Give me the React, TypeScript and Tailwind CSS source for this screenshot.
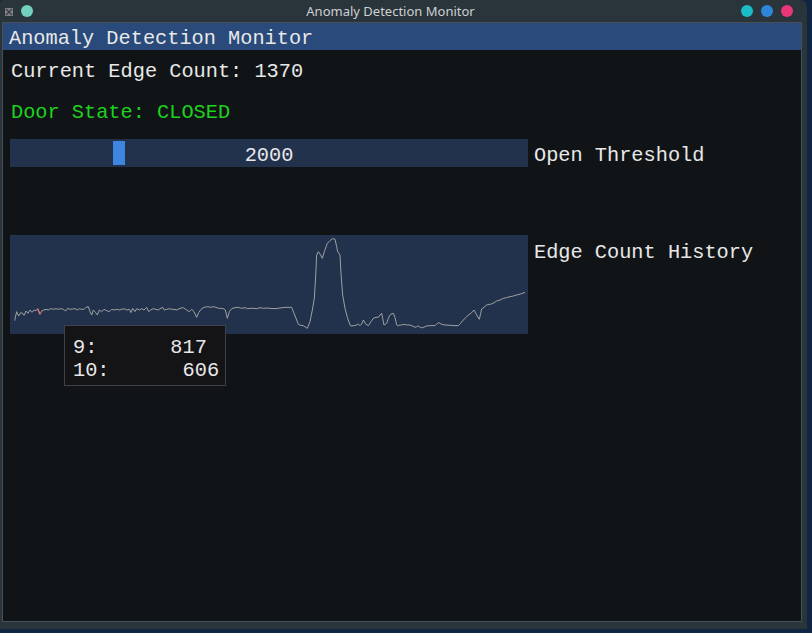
import React from "react";

const L: [number, number][] = [
  [44, 272], [50, 245], [56, 258], [62, 248], [68, 250], [72, 256], [78, 243], [84, 250], [90, 240], [96, 247],
  [102, 240], [108, 242], [113, 236], [120, 253], [126, 242], [132, 240], [138, 238], [145, 240], [152, 236],
  [160, 238], [168, 236], [175, 238], [182, 236], [190, 238], [197, 243], [203, 235], [210, 238], [218, 237],
  [225, 236], [232, 240], [238, 236], [245, 238], [252, 238], [258, 232], [265, 230], [270, 245], [275, 255],
  [280, 240], [287, 248], [292, 255], [298, 240], [305, 245], [312, 238], [320, 242], [328, 245], [335, 238],
  [342, 240], [350, 238], [358, 240], [365, 238], [372, 236], [380, 240], [388, 238], [393, 248], [398, 235],
  [405, 245], [410, 236], [418, 240], [425, 236], [432, 240], [440, 232], [446, 245], [452, 240], [460, 236],
  [468, 238], [475, 240], [480, 236], [488, 232], [493, 240], [500, 238], [508, 236], [515, 238], [522, 238],
  [530, 240], [540, 235], [550, 233], [560, 240], [568, 245], [575, 238], [582, 245], [590, 262], [596, 248],
  [603, 238], [612, 232], [622, 230], [632, 232], [640, 230], [648, 232], [655, 235], [662, 235], [670, 236],
  [676, 240], [682, 265], [688, 245], [695, 236], [705, 233], [715, 232], [725, 235], [735, 233], [742, 236],
  [750, 235], [760, 235], [770, 236], [780, 233], [790, 235], [800, 234],
];

const R: [number, number][] = [
  [0, 235], [15, 236], [30, 234], [45, 232], [65, 232], [72, 250], [80, 270], [85, 283], [92, 286], [100, 287],
  [107, 292], [112, 295], [120, 275], [127, 240], [133, 205], [137, 140], [140, 75], [145, 65], [150, 72],
  [157, 85], [163, 65], [172, 40], [180, 32], [187, 26], [195, 28], [200, 50], [203, 65], [210, 75], [213, 130],
  [218, 195], [225, 235], [232, 262], [240, 285], [243, 288], [252, 287], [260, 285], [265, 282], [270, 287],
  [275, 282], [280, 270], [287, 282], [295, 287], [303, 275], [310, 265], [318, 262], [325, 262], [330, 255],
  [335, 250], [338, 265], [342, 285], [350, 280], [355, 265], [358, 258], [363, 252], [370, 250], [375, 262],
  [380, 285], [383, 287], [390, 285], [395, 285], [403, 283], [412, 285], [420, 285], [428, 288], [435, 292],
  [440, 290], [445, 288], [452, 293], [458, 293], [465, 290], [470, 288], [480, 287], [495, 287], [500, 282],
  [505, 278], [510, 280], [515, 283], [525, 285], [540, 286], [555, 287], [565, 287], [572, 280], [580, 270],
  [588, 262], [595, 255], [603, 250], [612, 240], [620, 255], [628, 268], [632, 250], [635, 237], [642, 232],
  [650, 225], [658, 223], [665, 222], [672, 218], [680, 213], [690, 210], [700, 205], [710, 203], [720, 200],
  [730, 198], [740, 195], [752, 192], [765, 187],
];

const pts: [number, number][] = [
  ...L.map(([x, y]) => [x / 3 - 10, y / 3 - 5] as [number, number]),
  ...R.map(([x, y]) => [260 + x / 3, y / 3 - 5] as [number, number]),
];
const polyStr = pts.map(([x, y]) => `${x.toFixed(2)},${y.toFixed(2)}`).join(" ");
const redA = [113 / 3 - 10, 236 / 3 - 5];
const redB = [120 / 3 - 10, 253 / 3 - 5];

const mono = { fontFamily: '"Liberation Mono", "DejaVu Sans Mono", monospace' };

export default function App() {
  return (
    <div className="relative w-[812px] h-[633px] overflow-hidden bg-[#0f2543]">
      <div className="w-[807px] h-[629px] bg-[#29343b] rounded-tr-[7px] rounded-tl-[3px] flex flex-col">
        {/* WM title bar */}
        <div className="h-[22px] flex items-center">
          <div className="flex items-center w-[40px] pl-[5px] gap-[8px]">
            <div className="w-[8px] h-[8px] bg-[#7c8186] flex items-center justify-center mt-[1px]">
              <svg width="8" height="8" viewBox="0 0 8 8">
                <path d="M1 1 L7 7 M7 1 L1 7" stroke="#3a3d40" strokeWidth="1.2" />
              </svg>
            </div>
            <div className="w-[12px] h-[12px] rounded-full bg-[#73d0bf]" />
          </div>
          <div
            className="flex-1 text-center text-[13px] text-[#cdd1d4] leading-[22px]"
            style={{ fontFamily: '"Noto Sans", sans-serif' }}
          >
            Anomaly Detection Monitor
          </div>
          <div className="flex items-center gap-[8px] w-[66px]">
            <div className="w-[12px] h-[12px] rounded-full bg-[#1bbcc6]" />
            <div className="w-[12px] h-[12px] rounded-full bg-[#2e86d8]" />
            <div className="w-[12px] h-[12px] rounded-full bg-[#ea3679]" />
          </div>
        </div>
        {/* Client area */}
        <div className="ml-[2px] w-[800px] h-[600px] border border-[#474f58] bg-[#111417] flex flex-col" style={mono}>
          <div className="h-[27px] bg-[#294a7a] pl-[6px] pt-[6px] text-[20.3px] leading-[20px] text-[#e8e8e8] whitespace-pre">
            Anomaly Detection Monitor
          </div>
          <div className="px-[7px] flex flex-col text-[20.3px] leading-[20px] text-[#e8e8e8]">
            <div className="mt-[12px] h-[20px] pl-[1px] whitespace-pre">Current Edge Count: 1370</div>
            <div className="mt-[21px] h-[20px] pl-[1px] whitespace-pre text-[#1ed21e]">Door State: CLOSED</div>
            <div className="mt-[16px] flex items-start">
              <div className="relative w-[518px] h-[28px] bg-[#22324d]">
                <div className="absolute left-[103px] top-[2px] w-[12px] h-[24px] bg-[#3f86e0]" />
                <div className="relative text-center pt-[7px] whitespace-pre">2000</div>
              </div>
              <div className="pl-[6px] pt-[7px] whitespace-pre">Open Threshold</div>
            </div>
            <div className="mt-[68px] flex items-start">
              <div className="w-[518px] h-[99px] bg-[#22324d]">
                <svg width="518" height="99" viewBox="0 0 518 99" className="block">
                  <polyline points={polyStr} fill="none" stroke="#a0a0a0" strokeWidth="1" strokeLinejoin="round" />
                  <line x1={redA[0]} y1={redA[1]} x2={redB[0]} y2={redB[1]} stroke="#ff6e59" strokeWidth="1.1" />
                </svg>
              </div>
              <div className="pl-[6px] pt-[8px] whitespace-pre">Edge Count History</div>
            </div>
          </div>
        </div>
      </div>
      {/* Tooltip */}
      <div
        className="absolute left-[64px] top-[325px] w-[162px] h-[61px] bg-[#141416] border border-[#40424a] pl-[8px] pt-[10px] text-[20.3px] leading-[23px] text-[#e8e8e8] whitespace-pre"
        style={mono}
      >
        <div>9:      817</div>
        <div>10:      606</div>
      </div>
    </div>
  );
}
